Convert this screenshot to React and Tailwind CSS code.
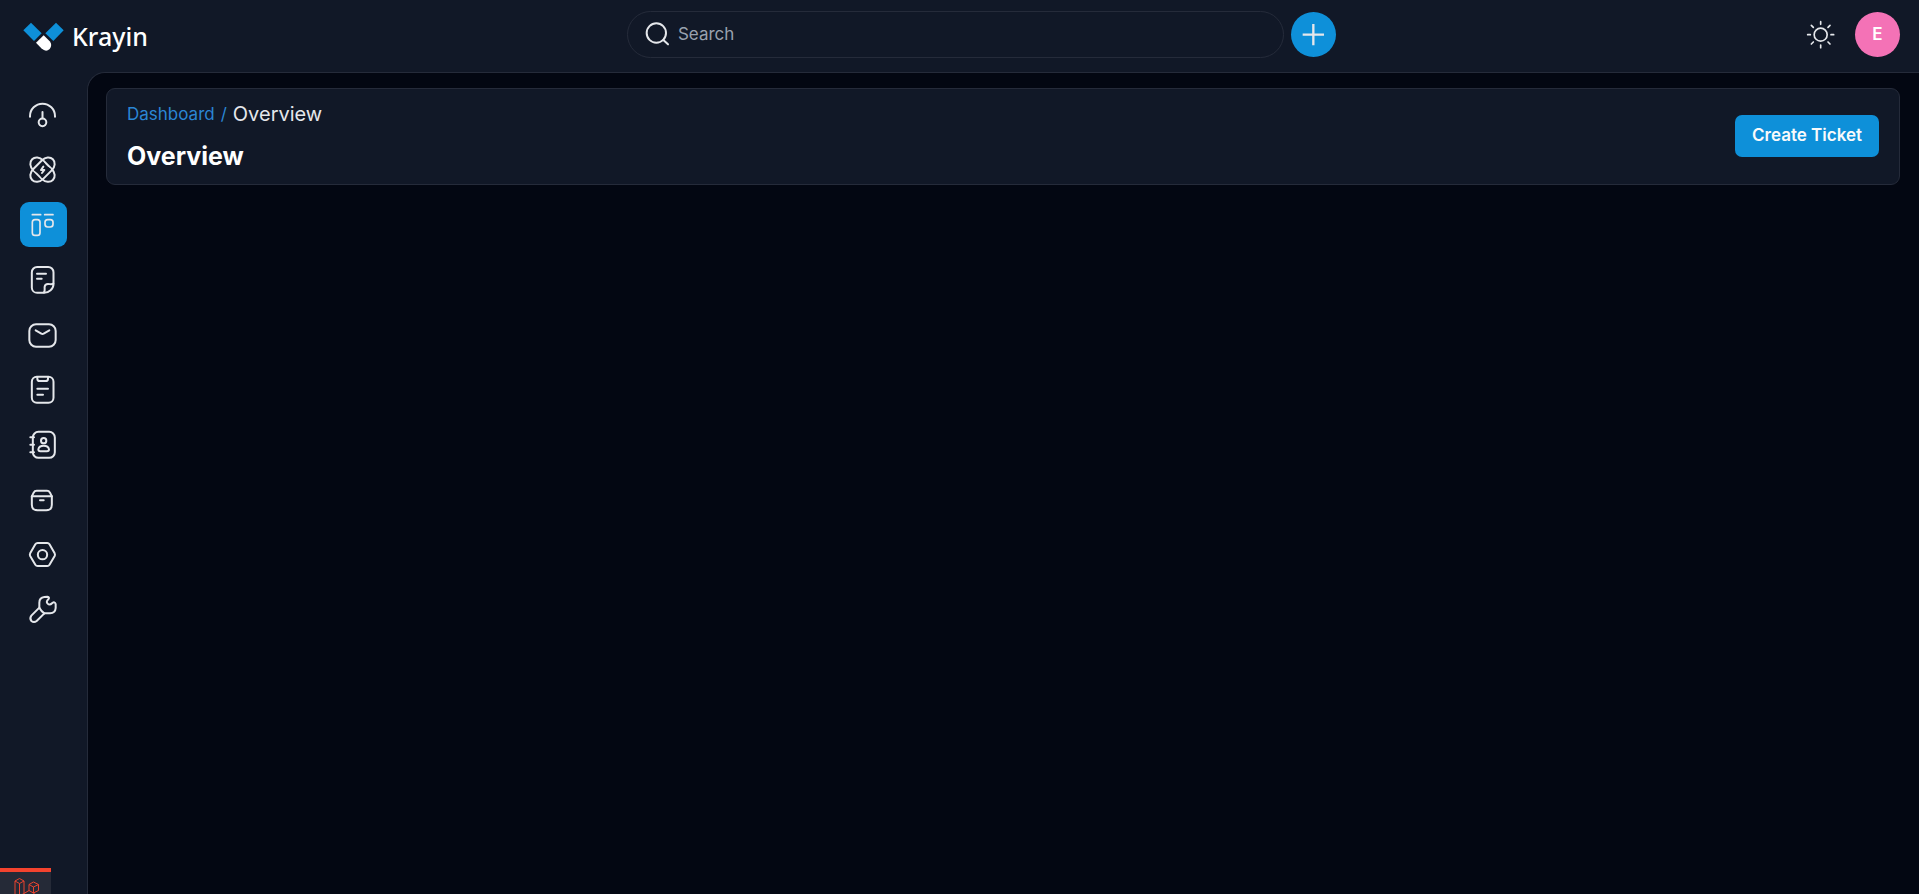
import React from 'react';

const navItems = [
  {
    label: 'Dashboard',
    icon: (
      <>
        <path d="M0 47 V45.5 A37.5 37.5 0 0 1 75 45.5 V47" />
        <path d="M37.5 33 V52" />
        <circle cx="37.5" cy="64" r="11.5" />
      </>
    ),
  },
  {
    label: 'Leads',
    icon: (
      <>
        <rect x="-6.5" y="20" width="88" height="42" rx="25" ry="21" transform="rotate(45 37.5 41)" />
        <path d="M16 46 Q27 31 42 20 M33 62 Q48 51 59 36" stroke="#111827" strokeWidth="11" strokeLinecap="butt" />
        <rect x="-6.5" y="20" width="88" height="42" rx="25" ry="21" transform="rotate(-45 37.5 41)" />
        <path d="M40 32 L33 42 H43 L36 51" />
      </>
    ),
  },
  {
    label: 'Tickets',
    active: true,
    icon: (
      <>
        <path d="M7 11 H32 M44 11 H69" />
        <rect x="7" y="26" width="23" height="47" rx="8" />
        <rect x="45" y="26" width="24" height="22" rx="8" />
      </>
    ),
  },
  {
    label: 'Quotes',
    icon: (
      <>
        <path d="M70.5 54 V19 A16 16 0 0 0 54.5 3 H21.5 A16 16 0 0 0 5.5 19 V65 A16 16 0 0 0 21.5 80.5 H42 C57 80.5 70.5 69 70.5 54 Z" />
        <path d="M42 79 C46 72 43 69 44 62 Q45 54 54 54 C61 54 65 56 70 53" />
        <path d="M21 23 H48 M21 38 H35" />
      </>
    ),
  },
  {
    label: 'Mail',
    icon: (
      <>
        <rect x="-2" y="10" width="79" height="67" rx="20" />
        <path d="M17 28 L34 38 Q37.5 40 41 38 L58 28" />
      </>
    ),
  },
  {
    label: 'Activities',
    icon: (
      <>
        <rect x="5.5" y="2.5" width="65" height="78" rx="15" />
        <path d="M22 3 V8 Q22 15 29 15 H47 Q54 15 54 8 V3" />
        <path d="M22 38 H54 M22 56 H39" />
      </>
    ),
  },
  {
    label: 'Contacts',
    icon: (
      <>
        <rect x="8.5" y="2.5" width="66" height="78" rx="17" />
        <path d="M1 19 H12 M1 41 H12 M1 64 H12" />
        <circle cx="41" cy="29" r="8" />
        <path d="M25 55 Q27 44 41 44 Q55 44 57 55 Q57 61 51 61 H31 Q25 61 25 55 Z" />
      </>
    ),
  },
  {
    label: 'Products',
    icon: (
      <>
        <path d="M5.5 31 H65.5 V56 Q65.5 72.5 49 72.5 H22 Q5.5 72.5 5.5 56 Z" />
        <path d="M5.5 31 L11 20 Q14 14.5 20 14.5 H51 Q57 14.5 60 20 L65.5 31" />
        <path d="M30 42.5 H41" />
      </>
    ),
  },
  {
    label: 'Settings',
    icon: (
      <>
        <path d="M16 10 Q18.5 6 23 6 H52 Q56 6 58.5 10 L74 37 Q76 41 74 45 L58.5 71 Q56 75 52 75 H23 Q18.5 75 16 71 L0.5 45 Q-1.5 41 0.5 37 Z" />
        <circle cx="37.5" cy="41" r="14" />
      </>
    ),
  },
  {
    label: 'Configuration',
    icon: (
      <>
        <path d="M28 35 V20 Q28 5 43 3 L52 2.5 Q60 4 55 10 Q47 17 53 23 Q59 29 67 21 Q74 16 77 24 V36 Q76 51 60 52 H43 L20 75 Q12 81 4 75 Q-2 67 4 59 Z" />
        <path d="M28 35 Q34 46 43 52" />
      </>
    ),
  },
];

function Icon({ children, strokeWidth = 6 }) {
  return (
    <svg
      viewBox="0 0 81 81"
      className="h-[27px] w-[27px] shrink-0 overflow-visible"
      fill="none"
      stroke="currentColor"
      strokeWidth={strokeWidth}
      strokeLinecap="round"
      strokeLinejoin="round"
      aria-hidden="true"
    >
      {children}
    </svg>
  );
}

function Logo() {
  return (
    <a href="#" className="flex items-center gap-2 pt-[3px] pr-2 text-white">
      <svg viewBox="69 66 123 87" className="h-[29px] w-[41px]" aria-hidden="true">
        <path d="M70 91 L93 68 L125 100 L102 123 Z" fill="#0e90d9" />
        <path d="M168 68 L191 91 L160 123 L136 100 Z" fill="#0e90d9" />
        <path d="M131 106 L108 128 L124 145 Q138 158 149 147 Q158 135 149 124 Z" fill="#fff" />
      </svg>
      <span className="font-['Noto_Sans',sans-serif] text-[25px] leading-8 font-medium">Krayin</span>
    </a>
  );
}

function Header() {
  return (
    <header className="flex h-[72px] items-center justify-between pr-[19px] pb-[3px] pl-[23px]">
      <Logo />

      {/* Search and quick add */}
      <div className="flex max-w-[709px] flex-1 items-center gap-[7px]">
        <label className="flex h-[47px] flex-1 items-center gap-[7px] rounded-full border border-[#252b3a] px-4 text-gray-200">
          <Icon>
            <circle cx="37" cy="36" r="29" />
            <path d="M58 57 L72 70" />
          </Icon>
          <input
            type="text"
            aria-label="Search"
            placeholder="Search"
            className="w-full bg-transparent text-[17px] text-gray-200 outline-none placeholder:text-gray-400"
          />
        </label>
        <button type="button" aria-label="Quick add" className="flex size-[45px] items-center justify-center rounded-full bg-[#0e90d9] text-gray-200">
          <Icon strokeWidth={7}>
            <path d="M40 9 V73 M8 41 H72" strokeLinecap="butt" />
          </Icon>
        </button>
      </div>

      <div className="flex items-center gap-[21px]">
        <button type="button" aria-label="Toggle theme" className="text-gray-200">
          <Icon strokeWidth={5}>
            <circle cx="41" cy="41" r="19.5" />
            <path d="M41 2 V10 M41 72 V80 M2 41 H10 M72 41 H80 M13 13 L19 19 M63 63 L69 69 M13 69 L19 63 M63 19 L69 13" />
          </Icon>
        </button>
        <button type="button" className="size-[45px] rounded-full bg-[#f472b6] text-[17px] font-semibold text-white">
          E
        </button>
      </div>
    </header>
  );
}

function Sidebar() {
  return (
    <nav className="w-[87px] shrink-0 px-5 pt-5">
      <ul className="flex flex-col gap-[10px]">
        {navItems.map((item) => (
          <li key={item.label}>
            <a
              href="#"
              aria-label={item.label}
              className={`flex h-[45px] items-center rounded-[9px] px-[10px] text-gray-200 ${item.active ? 'bg-[#0e90d9]' : ''}`}
            >
              <Icon strokeWidth={item.active ? 5 : 6}>{item.icon}</Icon>
            </a>
          </li>
        ))}
      </ul>
    </nav>
  );
}

function DebugBar() {
  return (
    <button type="button" aria-label="Open debug bar" className="fixed bottom-0 left-0 flex h-[26px] w-[51px] justify-center border-t-4 border-[#f4432e] bg-[#252a37] pt-[6px]">
      <svg viewBox="0 0 26 26" className="h-[26px] w-[26px] shrink-0" fill="none" stroke="#e8432f" strokeWidth="1" strokeLinejoin="round" aria-hidden="true">
        <path d="M2 3 L6.5 0.5 L11 3 L6.5 5.5 Z M2 3 V20 L11 25.5 L21 20 V14 M6.5 5.5 V18 L11 15.5 V3 M11 15.5 L16 12.5" />
        <path d="M16 6.5 L20.5 4 L25.5 6.5 L20.5 9 Z M16 6.5 V12.5 L20.5 15 L25.5 12.5 V6.5 M20.5 9 V15" />
      </svg>
    </button>
  );
}

export default function App() {
  return (
    <div className="flex min-h-screen flex-col bg-[#111827] font-['Inter',sans-serif]">
      <Header />
      <div className="flex flex-1">
        <Sidebar />
        <main className="flex-1 rounded-tl-[18px] border-t border-l border-[#252b3a] bg-[#030712] pt-[15px] pr-[19px] pl-[18px]">
          <div className="flex items-center justify-between rounded-[9px] border border-[#252b3a] bg-[#111827] px-5 pt-[11px] pb-3">
            <div className="flex flex-col gap-3">
              <nav aria-label="Breadcrumb" className="flex items-center gap-[6px] text-[17px] leading-7 text-[#2b86d4]">
                <a href="#">Dashboard</a>
                <span>/</span>
                <span className="text-xl leading-7 text-gray-200">Overview</span>
              </nav>
              <h1 className="text-[25px] leading-8 font-bold text-white">Overview</h1>
            </div>
            <button type="button" className="h-[42px] rounded-[7px] bg-[#0e90d9] px-[17px] text-[17px] font-semibold text-gray-50">
              Create Ticket
            </button>
          </div>
        </main>
      </div>
      <DebugBar />
    </div>
  );
}
